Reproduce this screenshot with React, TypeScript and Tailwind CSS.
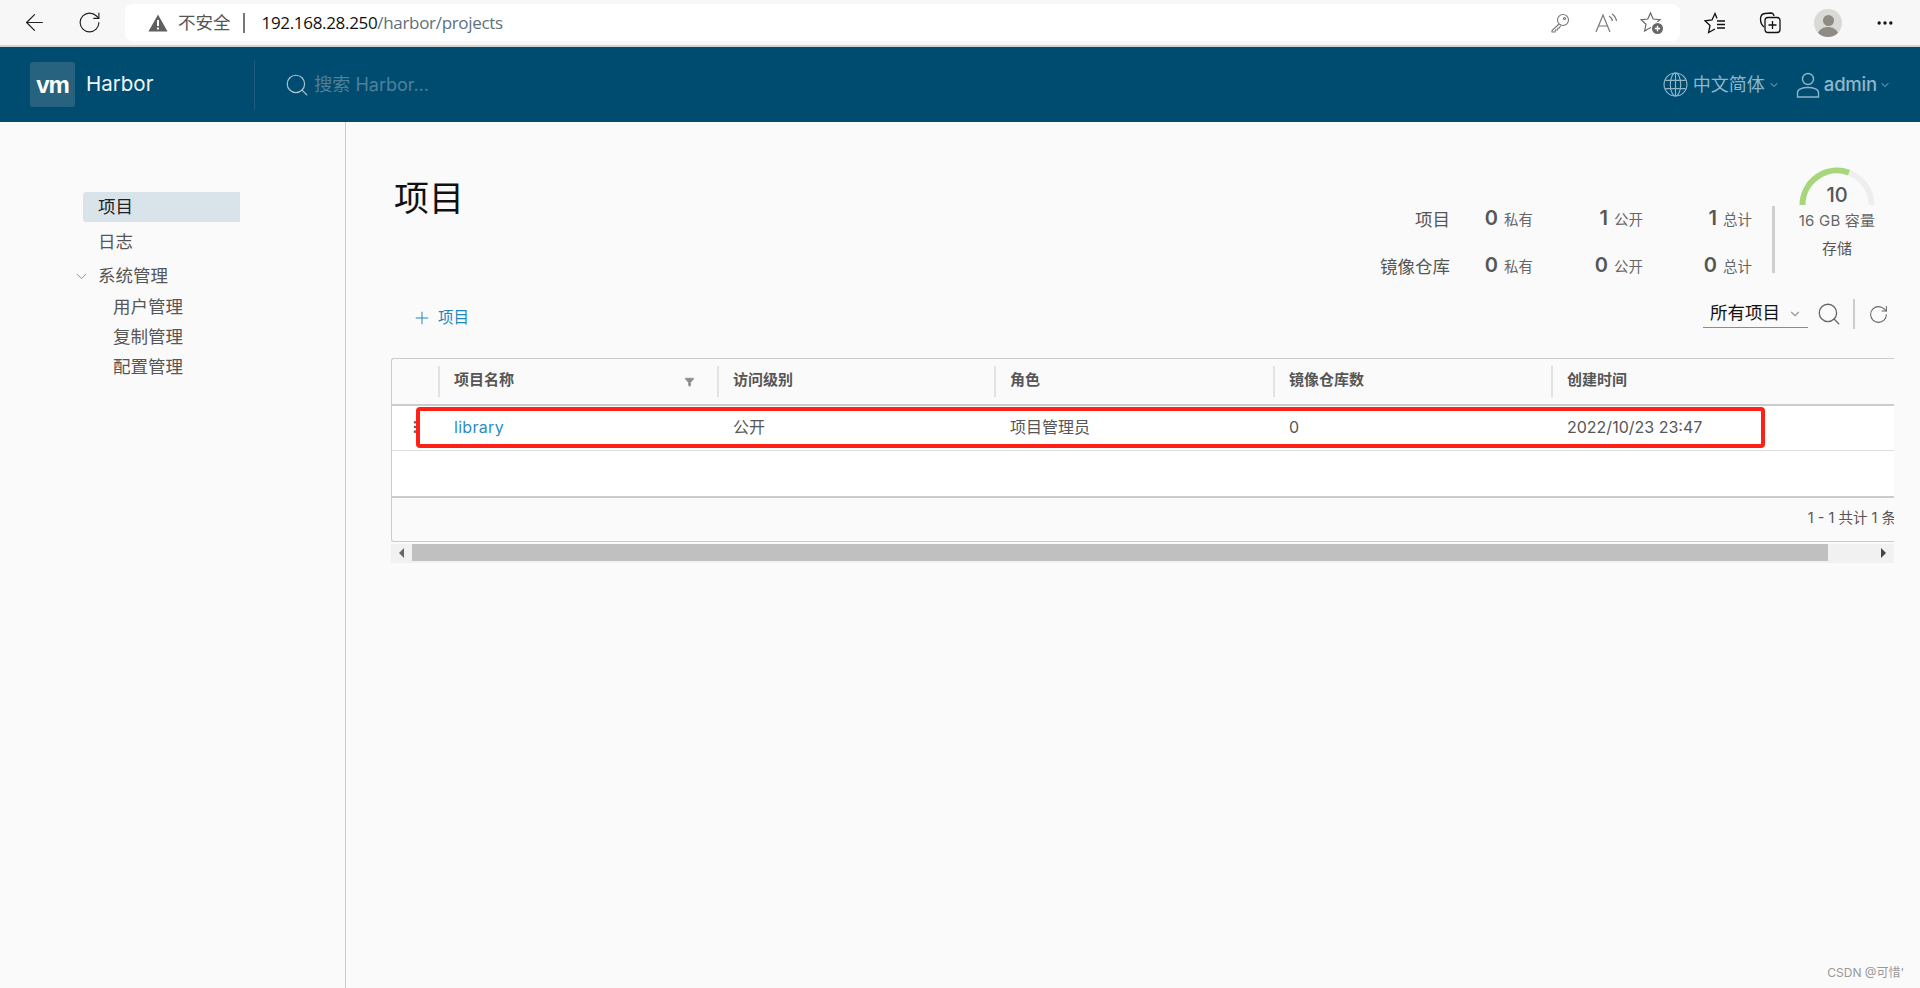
import { ArrowLeft, ChevronDown, Plus, RotateCw, Search, Filter, Ellipsis } from "lucide-react";

const font = "font-['Inter','Noto_Sans_CJK_SC',sans-serif]";

function BrowserBar() {
  return (
    <div className="flex h-[47px] shrink-0 items-center border-b-2 border-[#d4d4d4] bg-[#f7f7f7] text-[#555] font-['Open_Sans','Noto_Sans_CJK_SC',sans-serif]">
      <ArrowLeft className="ml-[21px] h-[27px] w-[27px] text-[#222]" strokeWidth={1.1} />
      <RotateCw className="ml-[29px] h-[25px] w-[25px] text-[#222]" strokeWidth={1.1} />
      <div className="ml-[23px] flex h-[37px] w-[1555px] items-center rounded-lg bg-white">
        <svg viewBox="0 0 20 18" className="ml-[23px] h-[18px] w-[20px]">
          <path d="M10 0.5 L19.5 17.5 H0.5 Z" fill="#5f5f5f" />
          <path d="M9 6h2v6H9zM9 13.5h2v2H9z" fill="#fff" />
        </svg>
        <span className="ml-[10px] text-[17.5px]">不安全</span>
        <span className="ml-[12px] h-[20px] w-[2px] bg-[#777]" />
        <span className="ml-[17px] text-[17px] tracking-[-0.32px] text-[#60707c]">
          <span className="text-[#111]">192.168.28.250</span>/harbor/projects
        </span>
        <div className="ml-auto flex items-center">
          <svg viewBox="0 0 20 20" className="h-5 w-5" fill="none" stroke="#777" strokeWidth="1.1">
            <circle cx="13" cy="7" r="5.5" />
            <path d="M9 11 L2 17.5 V19 H5 L5.5 17 H7.5 L8 15 H9.5 L10.5 12.5" />
            <circle cx="14.5" cy="5.5" r="1" />
          </svg>
          <svg viewBox="0 0 24 20" className="ml-[25px] h-5 w-[24px]" fill="none" stroke="#777" strokeWidth="1.2">
            <path d="M1 19 L8 2 L15 19 M3.5 13 H12.5" />
            <path d="M14 3 C16 4 17 6 17.5 8 M17 1 C19.5 2.5 21 5 21.5 8" />
          </svg>
          <svg viewBox="0 0 24 24" className="ml-[21px] mr-[16px] h-[24px] w-[24px]" fill="none" stroke="#666" strokeWidth="1.2">
            <path d="M10.5 2 L13.2 8 L20 8.7 L15 13.3 L16.4 20 L10.5 16.6 L4.6 20 L6 13.3 L1 8.7 L7.8 8 Z" />
            <circle cx="17.5" cy="17.5" r="6.5" fill="#fff" stroke="none" />
            <circle cx="17.5" cy="17.5" r="5.5" fill="#666" stroke="none" />
            <path d="M17.5 14.8 V20.2 M14.8 17.5 H20.2" stroke="#fff" strokeWidth="1.4" />
          </svg>
        </div>
      </div>
      <svg viewBox="0 0 22 22" className="ml-[24px] h-[22px] w-[22px]" fill="none" stroke="#111" strokeWidth="1.3">
        <path d="M13 6.5 L11 1.5 L8 8 L1 8.8 L6 13.5 L4.6 20.5 L11 17" />
        <path d="M13 9 H21 M13 12.5 H21 M13 16 H21" />
      </svg>
      <svg viewBox="0 0 22 22" className="ml-[33px] h-[22px] w-[22px]" fill="none" stroke="#111" strokeWidth="1.3">
        <path d="M5 15 C2.5 13 1.5 10 1.5 7 Q1.5 2 6 1.5 L12 1 Q14.5 1 15 4" />
        <rect x="6" y="5.5" width="15" height="15" rx="3" />
        <path d="M13.5 9 V17 M9.5 13 H17.5" />
      </svg>
      <div className="ml-[33px] flex h-[28px] w-[28px] items-end justify-center overflow-hidden rounded-full bg-[#d9d9d6]">
        <div className="flex flex-col items-center">
          <div className="h-[11px] w-[11px] rounded-full bg-[#8e8b85]" />
          <div className="mt-[1px] h-[10px] w-[22px] rounded-t-full bg-[#8e8b85]" />
        </div>
      </div>
      <Ellipsis className="ml-[33px] h-5 w-5 text-[#111]" strokeWidth={2} />
    </div>
  );
}

function TopNav() {
  return (
    <div className={`flex h-[75px] shrink-0 items-center bg-[#004c70] ${font}`}>
      <div className="ml-[30px] flex h-[45px] w-[45px] items-center justify-center rounded-[3px] bg-[#27627f]">
        <span className="font-['Liberation_Sans'] text-[24px] font-bold leading-none tracking-[-1px] text-white">vm</span>
      </div>
      <span className="ml-[11px] text-[20.5px] text-[#f0f6fa]">Harbor</span>
      <div className="ml-[101px] h-[50px] w-px bg-[#1b5d7d]" />
      <Search className="ml-[29px] h-[26px] w-[26px] text-[#a8c4d2]" strokeWidth={1.1} />
      <span className="ml-[4px] text-[18px] text-[#4f809a]">搜索 Harbor...</span>
      <div className="ml-auto flex items-center text-[#8fb5c9]">
        <svg viewBox="0 0 24 24" className="h-[25px] w-[25px]" fill="none" stroke="currentColor" strokeWidth="1.1">
          <circle cx="12" cy="12" r="11" />
          <ellipse cx="12" cy="12" rx="5" ry="11" />
          <path d="M12 1 V23 M2.2 8 H21.8 M2.2 16 H21.8" />
        </svg>
        <span className="ml-[5px] text-[18px]">中文简体</span>
        <ChevronDown className="ml-[3px] h-[12px] w-[12px]" />
        <svg viewBox="0 0 24 26" className="ml-[16px] h-[26px] w-[24px]" fill="none" stroke="currentColor" strokeWidth="1.4">
          <circle cx="12" cy="7" r="5.5" />
          <path d="M1.5 25 V20.5 C1.5 17.5 6 15.5 12 15.5 C18 15.5 22.5 17.5 22.5 20.5 V25 Z" />
        </svg>
        <span className="ml-[4px] text-[18.5px] font-medium tracking-[-0.2px]">admin</span>
        <ChevronDown className="ml-[2px] mr-[29px] h-[12px] w-[12px]" />
      </div>
    </div>
  );
}

function Sidebar() {
  return (
    <div className="w-[346px] shrink-0 border-r border-[#ccc] pl-[83px] pt-[70px] text-[17.5px] leading-[30px] text-[#565656]">
      <div className="h-[30px] w-[157px] rounded-l-[3px] bg-[#d9e4ea] pl-[15px] text-[#222]">项目</div>
      <div className="mt-[5px] pl-[15px]">日志</div>
      <div className="relative mt-[4px] pl-[15px]">
        <ChevronDown className="absolute left-[-10px] top-[7px] h-[17px] w-[17px] text-[#8c8c8c]" strokeWidth={1.3} />
        系统管理
      </div>
      <div className="pl-[30px] pt-[1px]">
        <div>用户管理</div>
        <div>复制管理</div>
        <div>配置管理</div>
      </div>
    </div>
  );
}

function Stat({ n, label }: { n: number; label: string }) {
  return (
    <div className="flex items-center justify-end">
      <span className="mt-[-4px] text-[20px] font-semibold text-[#565656]">{n}</span>
      <span className="ml-[6px] text-[14.5px] text-[#666]">{label}</span>
    </div>
  );
}

function Stats() {
  return (
    <div className="flex items-start">
      <div className="mt-[74px] grid grid-cols-[70px_83px_110px_109px] grid-rows-[47px_47px] items-center text-[#565656]">
        <div className="mt-[1px] text-right text-[17.5px]">项目</div>
        <Stat n={0} label="私有" />
        <Stat n={1} label="公开" />
        <Stat n={1} label="总计" />
        <div className="mt-[1px] whitespace-nowrap text-right text-[17.5px]">镜像仓库</div>
        <Stat n={0} label="私有" />
        <Stat n={0} label="公开" />
        <Stat n={0} label="总计" />
      </div>
      <div className="ml-[20px] mt-[84px] h-[67px] w-[3px] bg-[#d0d0d0]" />
      <div className="ml-[23px] mr-[18px] mt-[45px] flex w-[78px] flex-col items-center text-[#565656]">
        <div className="relative h-[38px] w-[76px]">
          <svg viewBox="0 0 76 38" className="h-[38px] w-[76px]" fill="none" strokeWidth="6">
            <path d="M50 5.7 A34.5 34.5 0 0 1 72.5 38" stroke="#eeeeee" />
            <path d="M3.5 38 A34.5 34.5 0 0 1 50 5.7" stroke="#a8d67c" />
          </svg>
          <span className="absolute inset-x-0 top-[15px] text-center text-[20px] font-medium leading-[26px]">10</span>
        </div>
        <div className="mt-[6px] whitespace-nowrap text-[15px] leading-[20px] tracking-[0.2px] text-[#666]">16 GB 容量</div>
        <div className="mt-[8px] text-[15px] leading-[20px]">存储</div>
      </div>
    </div>
  );
}

function Toolbar() {
  return (
    <div className="flex items-center justify-end pr-[5px]">
      <div className="flex h-[27px] w-[105px] items-center border-b border-[#8c8c8c] pl-[7px] text-[17.5px] text-[#111]">
        所有项目
        <ChevronDown className="ml-[8px] h-[14px] w-[14px] text-[#999]" />
      </div>
      <Search className="ml-[8px] h-[26px] w-[26px] text-[#666]" strokeWidth={1.2} />
      <div className="ml-[11px] h-[30px] w-[2px] bg-[#ccc]" />
      <RotateCw className="ml-[13px] h-[21px] w-[21px] text-[#666]" strokeWidth={1.2} />
    </div>
  );
}

const columns = ["项目名称", "访问级别", "角色", "镜像仓库数", "创建时间"];
const row = ["library", "公开", "项目管理员", "0", "2022/10/23 23:47"];

function DataTable() {
  return (
    <div className="relative">
      <div className="overflow-hidden rounded-l-[3px] border-y border-l border-[#ccc] bg-[#fafafa] text-[#565656]">
        <div className="grid h-[45px] grid-cols-[46px_279px_277px_279px_278px_1fr] items-center">
          <div />
          {columns.map((c, i) => (
            <div key={c} className="relative flex h-[31px] items-center border-l-2 border-[#e2e2e2] pb-[2px] pl-[14px] pr-[22px] text-[15px] font-semibold">
              {c}
              {i === 0 && <Filter className="ml-auto mt-[2px] h-[10px] w-[11px] fill-[#8c8c8c] text-[#8c8c8c]" />}
            </div>
          ))}
        </div>
        <div className="grid h-[46px] grid-cols-[46px_279px_277px_279px_278px_1fr] items-center border-t-2 border-[#ccc] bg-white pb-[2px] text-[16px]">
          <Ellipsis className="ml-[15px] h-4 w-4 rotate-90 text-[#666]" />
          {row.map((v, i) => (
            <div key={v} className={`pl-[16px] ${i === 0 ? "tracking-[0.3px] text-[#2c8cc4]" : ""}`}>{v}</div>
          ))}
        </div>
        <div className="h-[46px] border-t border-[#ddd] bg-white" />
        <div className="flex h-[45px] items-center justify-end overflow-hidden whitespace-nowrap border-t-2 border-[#ccc] pb-[3px] text-[14.5px]">
          <span className="-mr-[2px]">1 - 1 共计 1 条</span>
        </div>
      </div>
      <div className="mt-[2px] flex h-[19px] items-start bg-[#f1f1f1]">
        <div className="flex h-[17px] w-[21px] items-center justify-center">
          <div className="h-0 w-0 border-y-[5px] border-r-[5px] border-y-transparent border-r-[#666]" />
        </div>
        <div className="h-[17px] w-[1416px] bg-[#c0c0c0]" />
        <div className="ml-auto flex h-[17px] w-[21px] items-center justify-center">
          <div className="h-0 w-0 border-y-[5px] border-l-[5px] border-y-transparent border-l-[#444]" />
        </div>
      </div>
      {/* annotation drawn on the screenshot */}
      <div className="absolute left-[25px] top-[49px] h-[41px] w-[1349px] rounded-[4px] border-[4px] border-[#ff2018]" />
    </div>
  );
}

export default function App() {
  return (
    <div className={`relative flex h-[988px] w-[1920px] flex-col overflow-hidden bg-[#fafafa] ${font}`}>
      <BrowserBar />
      <TopNav />
      <div className="flex flex-1">
        <Sidebar />
        <div className="flex-1 pl-[45px] pr-[26px]">
          <div className="flex h-[236px] items-start justify-between">
            <div>
              <h1 className="ml-[3px] mt-[52px] text-[35px] leading-[48px] text-[#111]">项目</h1>
              <div className="ml-[21px] mt-[84px] flex items-center text-[15.5px] text-[#1e87bd]">
                <Plus className="h-[20px] w-[20px]" strokeWidth={1.2} />
                <span className="ml-[6px]">项目</span>
              </div>
            </div>
            <div>
              <Stats />
              <div className="mt-[9px]">
                <Toolbar />
              </div>
            </div>
          </div>
          <DataTable />
        </div>
      </div>
      <span className="absolute bottom-[6px] right-[16px] text-[12px] text-[#999]">CSDN @可惜'</span>
    </div>
  );
}
